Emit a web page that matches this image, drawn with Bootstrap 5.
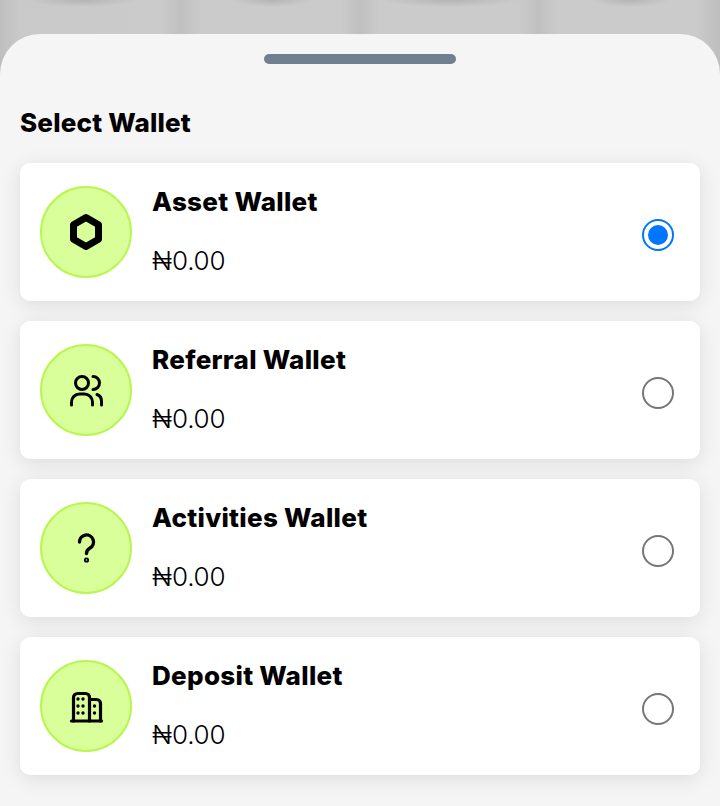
<!DOCTYPE html>
<html lang="en">
<head>
<meta charset="utf-8">
<title>Select Wallet</title>
<link href="https://cdn.jsdelivr.net/npm/bootstrap@5.3.0/dist/css/bootstrap.min.css" rel="stylesheet">
<style>
html,body{height:100%;}
body{
  margin:0;overflow:hidden;font-family:"Inter","Liberation Sans",sans-serif;color:#000;
  background-color:#cbcbcb;
  background-image:
    radial-gradient(ellipse 55px 7px at 82px 0,#b4b4b4,transparent),
    radial-gradient(ellipse 40px 7px at 272px 0,#b4b4b4,transparent),
    radial-gradient(ellipse 70px 7px at 450px 0,#b4b4b4,transparent),
    radial-gradient(ellipse 40px 7px at 630px 0,#b4b4b4,transparent),
    linear-gradient(90deg,#bebebe 0,#c9c9c9 20px,#cbcbcb 160px,#c0c0c0 181px,#cbcbcb 202px,#cbcbcb 340px,#c0c0c0 360px,#cbcbcb 380px,#cbcbcb 518px,#c0c0c0 538px,#cbcbcb 558px,#cbcbcb 695px,#bebebe 720px);
}
.sheet-panel{margin-top:34px;height:772px;background:#f5f5f5;border-radius:40px 40px 0 0;padding:20px 20px 0;}
.grab-bar{width:192px;height:10px;border-radius:5px;background:#708090;margin:0 auto;}
.sheet-title{font-size:26px;font-weight:800;line-height:38px;margin:40px 0 21px;letter-spacing:.2px;}
.wallet-list{gap:20px;}
.wallet-row{height:138px;background:#fff;border-radius:10px;padding:0 26px 0 20px;box-shadow:0 4px 20px rgba(0,0,0,.1);}
.coin{width:92px;height:92px;flex:none;border-radius:50%;background:#d9ff9a;border:2px solid #b8f650;margin-right:20px;}
.coin svg{display:block;}
.wallet-name{font-size:26px;font-weight:800;line-height:38px;margin:0;letter-spacing:.3px;}
.wallet-amt{font-size:26px;font-weight:300;line-height:38px;margin:21px 0 0;letter-spacing:-.2px;}
.wallet-copy{margin-top:-2px;}
.pick{width:32px;height:32px;flex:none;border-radius:50%;border:2px solid #767676;background:#fff;margin-top:6px;}
.pick.on{border-color:#0075ff;}
.pick.on::after{content:"";width:20px;height:20px;border-radius:50%;background:#0075ff;}
</style>
</head>
<body>
<div class="sheet-panel">
  <div class="grab-bar"></div>
  <h1 class="sheet-title">Select Wallet</h1>
  <div class="wallet-list d-flex flex-column">
    <div class="wallet-row d-flex align-items-center">
      <div class="coin d-flex align-items-center justify-content-center">
        <svg width="36" height="40" viewBox="0 0 36 40" fill="none"><path d="M18 5.500 30.500 12.700V27.300L18 34.500 5.500 27.300V12.700Z" stroke="#000" stroke-width="7" stroke-linejoin="round"/></svg>
      </div>
      <div class="wallet-copy flex-grow-1"><p class="wallet-name">Asset Wallet</p><p class="wallet-amt">₦0.00</p></div>
      <div class="pick on d-flex align-items-center justify-content-center"></div>
    </div>
    <div class="wallet-row d-flex align-items-center">
      <div class="coin d-flex align-items-center justify-content-center">
        <svg width="36" height="36" viewBox="0 0 36 36" fill="none" stroke="#000" stroke-width="3" stroke-linecap="round"><circle cx="14" cy="11" r="6.500"/><path d="M3.500 33v-3a8 8 0 0 1 8-8h5a8 8 0 0 1 8 8v3"/><path d="M25 4.500a6.500 6.500 0 0 1 0 13"/><path d="M29 22.500a7 7 0 0 1 4.500 6.500v4"/></svg>
      </div>
      <div class="wallet-copy flex-grow-1"><p class="wallet-name">Referral Wallet</p><p class="wallet-amt">₦0.00</p></div>
      <div class="pick"></div>
    </div>
    <div class="wallet-row d-flex align-items-center">
      <div class="coin d-flex align-items-center justify-content-center">
        <svg width="36" height="36" viewBox="0 0 36 36" fill="none" stroke="#000" stroke-width="3.400" stroke-linecap="round"><path d="M11.500 12a7 7 0 1 1 10.500 6c-2.500 1.500-3.500 3-3.500 5.500"/><circle cx="18.500" cy="30" r=".9"/></svg>
      </div>
      <div class="wallet-copy flex-grow-1"><p class="wallet-name">Activities Wallet</p><p class="wallet-amt">₦0.00</p></div>
      <div class="pick"></div>
    </div>
    <div class="wallet-row d-flex align-items-center">
      <div class="coin d-flex align-items-center justify-content-center">
        <svg width="36" height="36" viewBox="0 0 36 36" fill="none" stroke="#000" stroke-width="3.200" stroke-linecap="round" stroke-linejoin="round"><path d="M3.500 33h30"/><path d="M5.500 33V9.500a4 4 0 0 1 4-4h8a4 4 0 0 1 4 4V33"/><path d="M21.500 11.500h7a4 4 0 0 1 4 4V33"/><path stroke-width="3.400" d="M10 11h.01M15 11h.01M10 18h.01M15 18h.01M10 25h.01M15 25h.01M26.500 18h.01M26.500 25h.01"/></svg>
      </div>
      <div class="wallet-copy flex-grow-1"><p class="wallet-name">Deposit Wallet</p><p class="wallet-amt">₦0.00</p></div>
      <div class="pick"></div>
    </div>
  </div>
</div>
<script src="https://cdn.jsdelivr.net/npm/bootstrap@5.3.0/dist/js/bootstrap.bundle.min.js"></script>
</body>
</html>
